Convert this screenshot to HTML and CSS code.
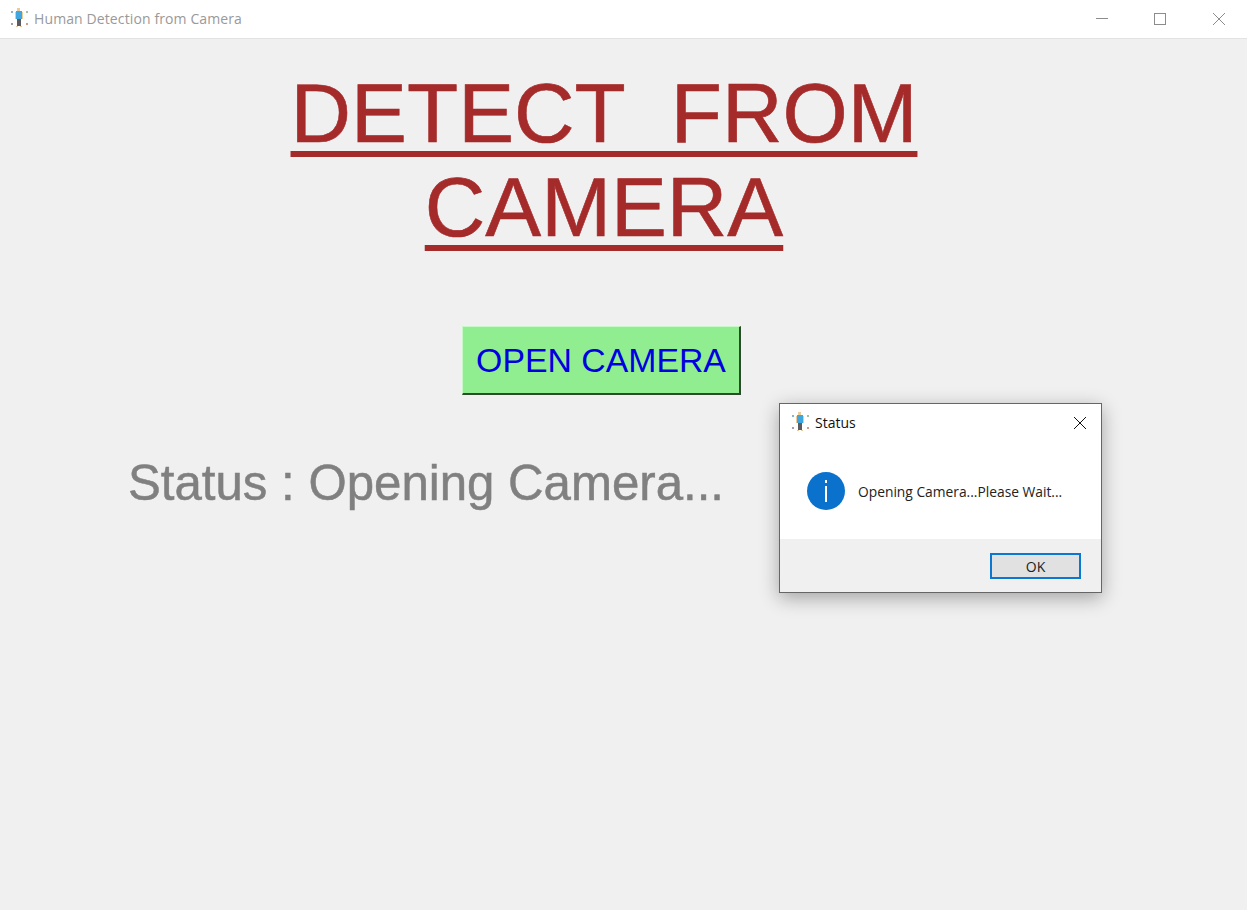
FILE: index.html
```html
<!DOCTYPE html>
<html lang="en">
<head>
<meta charset="utf-8">
<title>Human Detection from Camera</title>
<link rel="stylesheet" href="styles.css">
</head>
<body>
<svg class="defs" width="0" height="0" aria-hidden="true">
  <symbol id="app-icon" viewBox="0 0 20 20">
    <rect x="2" y="3" width="2" height="2" fill="#5b9bd0" opacity=".75"/>
    <rect x="17" y="3" width="2" height="2" fill="#7fb07a" opacity=".75"/>
    <rect x="2" y="15" width="2" height="2" fill="#8a7a9a" opacity=".75"/>
    <rect x="17" y="15" width="2" height="2" fill="#c9785a" opacity=".75"/>
    <rect x="8" y="0" width="3" height="3" fill="#eccb98"/>
    <rect x="7" y="3" width="6" height="8" fill="#40a6e0"/>
    <rect x="6" y="4" width="1" height="7" fill="#eccb98"/>
    <rect x="13" y="4" width="1" height="7" fill="#eccb98"/>
    <rect x="8" y="11" width="4" height="7" fill="#5c5c60"/>
    <rect x="7" y="18" width="2" height="1" fill="#eccb98"/>
    <rect x="11" y="18" width="2" height="1" fill="#eccb98"/>
  </symbol>
</svg>

<div class="window">
  <header class="titlebar">
    <svg class="app-icon main-icon"><use href="#app-icon"/></svg>
    <span class="window-title">Human Detection from Camera</span>
    <div class="window-controls">
      <svg class="ctl" viewBox="0 0 58 38"><path d="M23 18.5H35" stroke="#8c8c8c" fill="none"/></svg>
      <svg class="ctl" viewBox="0 0 58 38"><rect x="23.5" y="13.5" width="11" height="11" stroke="#8c8c8c" fill="none"/></svg>
      <svg class="ctl" viewBox="0 0 58 38"><path d="M24 13L36 25M36 13L24 25" stroke="#8c8c8c" fill="none"/></svg>
    </div>
  </header>

  <main class="content">
    <h1 class="heading">
      <span class="heading-line">DETECT  FROM</span>
      <span class="heading-line">CAMERA</span>
    </h1>
    <button class="open-btn" type="button">OPEN CAMERA</button>
    <p class="status">Status : Opening Camera...</p>
  </main>
</div>

<section class="dialog" role="dialog">
  <div class="dialog-title">
    <svg class="app-icon"><use href="#app-icon"/></svg>
    <span class="dialog-name">Status</span>
    <svg class="dialog-close" viewBox="0 0 14 14"><path d="M1 1L13 13M13 1L1 13" stroke="#111" fill="none"/></svg>
  </div>
  <div class="dialog-body">
    <svg class="info" viewBox="0 0 38 38">
      <circle cx="19" cy="19" r="19" fill="#0a72cc"/>
      <rect x="18" y="8" width="2" height="3" fill="#fff"/>
      <rect x="18" y="14" width="2" height="16" fill="#fff"/>
    </svg>
    <span class="dialog-msg">Opening Camera...Please Wait...</span>
  </div>
  <div class="dialog-footer">
    <button class="ok-btn" type="button">OK</button>
  </div>
</section>
</body>
</html>
```

FILE: styles.css
```css
* { box-sizing: border-box; }

html, body {
  margin: 0;
  height: 100%;
  background: #f0f0f0;
  overflow: hidden;
}

.defs { position: absolute; }

.window {
  display: flex;
  flex-direction: column;
  height: 910px;
}

.titlebar {
  display: flex;
  align-items: center;
  height: 39px;
  padding-left: 9px;
  background: #fff;
  border-bottom: 1px solid #e3e3e3;
}

.app-icon {
  width: 20px;
  height: 20px;
  flex: none;
}

.main-icon { margin-top: -2px; }

.window-title {
  margin-left: 5px;
  font: 14px "Open Sans", sans-serif;
  letter-spacing: 0.11px;
  color: #999;
  margin-top: -1px;
}

.window-controls {
  display: flex;
  margin-left: auto;
  align-self: flex-start;
}

.ctl {
  display: block;
  width: 58px;
  height: 38px;
}

.content {
  display: flex;
  flex-direction: column;
  align-items: center;
  flex: 1;
  padding-right: 39px;
  font-family: "Liberation Sans", Arial, sans-serif;
}

.heading {
  margin: 27px 0 0;
  display: flex;
  flex-direction: column;
  align-items: center;
  font-size: 83.8px;
  font-weight: 400;
  line-height: 94px;
  color: #a52a2a;
  -webkit-text-stroke: 0.6px #a52a2a;
}

.heading-line {
  display: block;
  white-space: pre;
  text-decoration: underline;
  text-decoration-thickness: 6px;
  text-underline-offset: 9px;
  text-decoration-skip-ink: none;
}

.open-btn {
  margin: 72px 5px 0 0;
  width: 279px;
  height: 69px;
  padding: 0;
  background: #90ee90;
  border: 0;
  border-top: 1px solid #c8f8c8;
  border-left: 1px solid #c8f8c8;
  border-right: 2px solid #2c4a2c;
  border-bottom: 2px solid #2c4a2c;
  color: #0000e0;
  font: 33.8px "Liberation Sans", Arial, sans-serif;
}

.status {
  align-self: flex-start;
  margin: 58px 0 0 128px;
  font-size: 49.2px;
  line-height: 60px;
  color: #808080;
  -webkit-text-stroke: 0.5px #808080;
}

.dialog {
  position: absolute;
  left: 779px;
  top: 403px;
  width: 323px;
  height: 190px;
  display: flex;
  flex-direction: column;
  background: #fff;
  border: 1px solid #666;
  box-shadow: 0 5px 18px rgba(0, 0, 0, 0.32);
  font-family: "Open Sans", sans-serif;
}

.dialog-title {
  display: flex;
  align-items: center;
  height: 38px;
  padding: 0 14px 0 10px;
}

.dialog-title .app-icon { margin-top: -2px; }

.dialog-name {
  margin-left: 5px;
  margin-top: -2px;
  font-size: 14px;
  color: #111;
}

.dialog-close {
  width: 14px;
  height: 14px;
  margin-left: auto;
}

.dialog-body {
  display: flex;
  align-items: center;
  height: 97px;
  padding: 0 0 0 27px;
}

.info {
  width: 38px;
  height: 38px;
  flex: none;
}

.dialog-msg {
  margin-left: 13px;
  font-size: 13.8px;
  color: #222;
  margin-top: 2px;
}

.dialog-footer {
  flex: 1;
  display: flex;
  align-items: flex-start;
  justify-content: flex-end;
  padding: 14px 20px 0 0;
  background: #f0f0f0;
}

.ok-btn {
  width: 91px;
  height: 26px;
  padding: 0;
  background: #e1e1e1;
  border: 2px solid #0a78d0;
  font: 14px "Open Sans", sans-serif;
  color: #222;
}
```
